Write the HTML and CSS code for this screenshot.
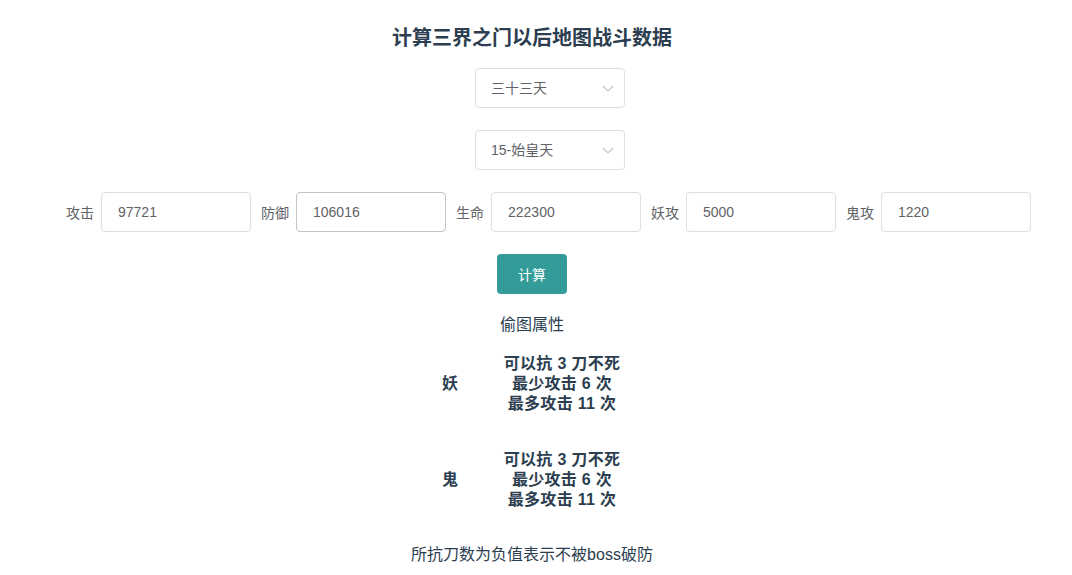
FILE: index.html
```html
<!DOCTYPE html>
<html lang="zh-CN">
<head>
    <meta charset="UTF-8">
    <title>三界之门计算</title>
    <link rel="stylesheet" href="styles.css">
</head>
<body>
    <div id="app">
        <h3 class="title">计算三界之门以后地图战斗数据</h3>

        <div class="select-row">
            <div class="el-select">
                <span class="el-select-value">三十三天</span>
                <svg class="el-select-arrow" width="12" height="7" viewBox="0 0 12 7"><path d="M1 1 L6 6 L11 1" fill="none" stroke="#c0c4cc" stroke-width="1.2"/></svg>
            </div>
        </div>
        <div class="select-row">
            <div class="el-select">
                <span class="el-select-value">15-始皇天</span>
                <svg class="el-select-arrow" width="12" height="7" viewBox="0 0 12 7"><path d="M1 1 L6 6 L11 1" fill="none" stroke="#c0c4cc" stroke-width="1.2"/></svg>
            </div>
        </div>

        <div class="input-row">
            <div class="field"><span class="field-label">攻击</span><div class="el-input">97721</div></div>
            <div class="field"><span class="field-label">防御</span><div class="el-input is-hover">106016</div></div>
            <div class="field"><span class="field-label">生命</span><div class="el-input">222300</div></div>
            <div class="field"><span class="field-label">妖攻</span><div class="el-input">5000</div></div>
            <div class="field"><span class="field-label">鬼攻</span><div class="el-input">1220</div></div>
        </div>

        <div class="btn-row">
            <button class="el-button">计算</button>
        </div>

        <div class="result-title">偷图属性</div>

        <div class="result-block first">
            <div class="result-name">妖</div>
            <div class="result-lines">
                <div>可以抗 3 刀不死</div>
                <div>最少攻击 6 次</div>
                <div>最多攻击 11 次</div>
            </div>
        </div>
        <div class="result-block">
            <div class="result-name">鬼</div>
            <div class="result-lines">
                <div>可以抗 3 刀不死</div>
                <div>最少攻击 6 次</div>
                <div>最多攻击 11 次</div>
            </div>
        </div>

        <div class="note">所抗刀数为负值表示不被boss破防</div>
    </div>
</body>
</html>
```

FILE: styles.css
```css
body {
    margin: 0;
    font-family: "Liberation Sans", "Noto Sans CJK SC", sans-serif;
    color: #2c3e50;
    background: #fff;
}

#app {
    padding-right: 8px;
    text-align: center;
}

.title {
    margin: 24px 0 0;
    font-size: 20px;
    line-height: 28px;
    font-weight: bold;
}

.select-row {
    display: flex;
    justify-content: center;
    padding-left: 36px;
    margin-top: 22px;
}

.title + .select-row {
    margin-top: 16px;
}

.el-select {
    position: relative;
    box-sizing: border-box;
    width: 150px;
    height: 40px;
    border: 1px solid #dcdfe6;
    border-radius: 4px;
    padding: 0 15px;
    text-align: left;
    font-size: 14px;
    line-height: 38px;
    color: #606266;
}

.el-select-arrow {
    position: absolute;
    right: 10px;
    top: 16px;
}

.input-row {
    display: flex;
    justify-content: center;
    gap: 10px;
    padding-left: 33px;
    margin-top: 22px;
}

.field {
    display: flex;
    align-items: center;
    gap: 7px;
}

.field-label {
    font-size: 14px;
    color: #606266;
}

.el-input {
    box-sizing: border-box;
    width: 150px;
    height: 40px;
    border: 1px solid #dcdfe6;
    border-radius: 4px;
    padding: 0 16px;
    text-align: left;
    font-size: 14px;
    line-height: 38px;
    color: #606266;
}

.el-input.is-hover {
    border-color: #c0c4cc;
}

.btn-row {
    margin-top: 22px;
}

.el-button {
    width: 70px;
    height: 40px;
    border: none;
    border-radius: 4px;
    background: #339b98;
    color: #fff;
    font-family: inherit;
    font-size: 14px;
}

.result-title {
    margin-top: 20px;
    font-size: 16px;
    line-height: 22px;
}

.result-block {
    display: flex;
    justify-content: center;
    align-items: center;
    gap: 44px;
    margin-top: 36px;
    font-size: 16px;
    font-weight: bold;
    line-height: 20px;
}

.result-block.first {
    margin-top: 18px;
}

.result-lines {
    width: 120px;
    text-align: center;
    letter-spacing: 0.3px;
}

.note {
    margin-top: 34px;
    font-size: 16px;
    line-height: 22px;
}
```
